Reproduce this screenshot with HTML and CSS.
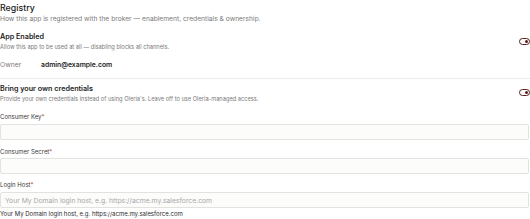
FILE: index.html
```html
<!DOCTYPE html>
<html lang="en">
<head>
    <meta charset="UTF-8">
    <meta name="viewport" content="width=device-width, initial-scale=1.0">
    <title>Registry</title>
    <link rel="stylesheet" href="styles.css">
</head>
<body>

<div class="registry">
    <h2 class="title">Registry</h2>
    <p class="subtitle">How this app is registered with the broker — enablement, credentials &amp; ownership.</p>

    <div class="setting">
        <div class="setting-text">
            <div class="setting-name">App Enabled</div>
            <div class="setting-desc">Allow this app to be used at all — disabling blocks all channels.</div>
        </div>
        <span class="toggle on"></span>
    </div>

    <div class="owner-row">
        <span class="owner-label">Owner</span>
        <span class="owner-value">admin@example.com</span>
    </div>

    <hr class="divider">

    <div class="setting setting-byo">
        <div class="setting-text">
            <div class="setting-name">Bring your own credentials</div>
            <div class="setting-desc">Provide your own credentials instead of using Oleria's. Leave off to use Oleria-managed access.</div>
        </div>
        <span class="toggle on"></span>
    </div>

    <div class="field field-first">
        <label for="key">Consumer Key<span class="req">*</span></label>
        <input type="text" id="key">
    </div>

    <div class="field">
        <label for="secret">Consumer Secret<span class="req">*</span></label>
        <input type="text" id="secret">
    </div>

    <div class="field field-last">
        <label for="host">Login Host<span class="req">*</span></label>
        <input type="text" id="host" placeholder="Your My Domain login host, e.g. https://acme.my.salesforce.com">
        <div class="hint">Your My Domain login host, e.g. https://acme.my.salesforce.com</div>
    </div>
</div>

</body>
</html>
```

FILE: styles.css
```css
body {
    font-family: Inter, "Noto Sans", sans-serif;
    background-color: #fff;
    color: #1c1c1c;
    margin: 0;
}

.registry {
    width: 530px;
}

.title {
    margin: 2px 0 0;
    font-size: 8.8px;
    line-height: 12px;
    font-weight: 500;
}

.subtitle {
    margin: 0;
    font-size: 6.7px;
    line-height: 10px;
    color: #7a7a7a;
}

.setting {
    display: flex;
    align-items: flex-start;
    justify-content: space-between;
    margin-top: 8px;
}

.setting-name {
    font-size: 7.2px;
    line-height: 10px;
    font-weight: 600;
}

.setting-desc {
    font-size: 5.7px;
    line-height: 10px;
    color: #7a7a7a;
}

.setting-byo .setting-desc {
    line-height: 9px;
}

.toggle {
    display: block;
    width: 11px;
    height: 7px;
    margin-top: 6px;
    border: 1px solid #5b1d1d;
    border-radius: 5px;
    background-color: #fff;
    position: relative;
    box-sizing: border-box;
}

.toggle.on::after {
    content: "";
    position: absolute;
    right: 1px;
    top: 1px;
    width: 3px;
    height: 3px;
    border-radius: 50%;
    background-color: #5b1d1d;
}

.owner-row {
    display: flex;
    margin-top: 8px;
    font-size: 6.8px;
    line-height: 10px;
}

.owner-label {
    width: 41px;
    color: #7a7a7a;
}

.owner-value {
    font-weight: 600;
}

.divider {
    border: none;
    border-top: 1px solid #ececec;
    margin: 8px 0 0;
}

.setting-byo {
    margin-top: 5px;
}

.setting-byo .toggle {
    margin-top: 5px;
}

.field {
    margin-top: 7px;
}

.field-first {
    margin-top: 9px;
}

.field-last {
    margin-top: 6px;
}

.field label {
    display: block;
    font-size: 6px;
    line-height: 10px;
    color: #3a3a3a;
}

.req {
    color: #c0392b;
}

.field input {
    display: block;
    width: 529px;
    height: 16px;
    margin-top: 1px;
    padding: 0 4px;
    box-sizing: border-box;
    border: 1px solid #e2e2e0;
    border-radius: 2px;
    background-color: #fcfcfb;
    font-family: inherit;
    font-size: 6.8px;
}

.field-first input,
.field-last input {
    margin-top: 2px;
}

.field input::placeholder {
    color: #a8a8a8;
}

.hint {
    font-size: 6px;
    line-height: 9px;
    margin-top: 1px;
    color: #2a2a2a;
}
```
